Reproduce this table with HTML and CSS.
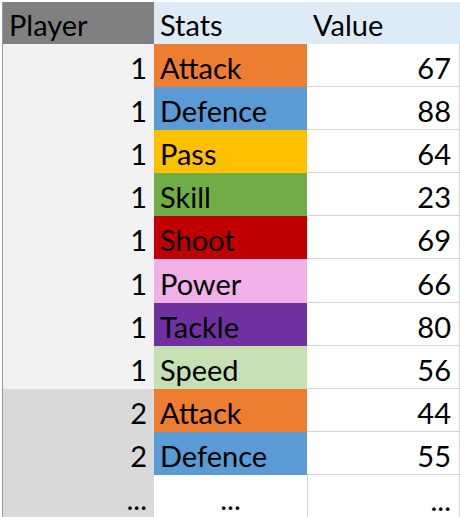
FILE: index.html
```html
<!DOCTYPE html>
<html>
<head>
<meta charset="utf-8">
<link rel="stylesheet" href="styles.css">
</head>
<body>
<div class="sheet">
  <div class="cell head head-player">Player</div>
  <div class="cell head head-blue">Stats</div>
  <div class="cell head head-blue">Value</div>

  <div class="cell num p1">1</div><div class="cell stat attack">Attack</div><div class="cell num val">67</div>
  <div class="cell num p1">1</div><div class="cell stat defence">Defence</div><div class="cell num val">88</div>
  <div class="cell num p1">1</div><div class="cell stat pass">Pass</div><div class="cell num val">64</div>
  <div class="cell num p1">1</div><div class="cell stat skill">Skill</div><div class="cell num val">23</div>
  <div class="cell num p1">1</div><div class="cell stat shoot">Shoot</div><div class="cell num val">69</div>
  <div class="cell num p1">1</div><div class="cell stat power">Power</div><div class="cell num val">66</div>
  <div class="cell num p1">1</div><div class="cell stat tackle">Tackle</div><div class="cell num val">80</div>
  <div class="cell num p1">1</div><div class="cell stat speed">Speed</div><div class="cell num val">56</div>
  <div class="cell num p2">2</div><div class="cell stat attack">Attack</div><div class="cell num val">44</div>
  <div class="cell num p2">2</div><div class="cell stat defence">Defence</div><div class="cell num val">55</div>
  <div class="cell num p2">...</div><div class="cell stat center blank">...</div><div class="cell num val last">...</div>
</div>
</body>
</html>
```

FILE: styles.css
```css
html, body {
  margin: 0;
  padding: 0;
  background: #ffffff;
}

body {
  width: 460px;
  height: 517px;
  overflow: hidden;
  font-family: "Lato", "Liberation Sans", sans-serif;
  font-size: 29px;
  color: #000000;
}

.sheet {
  margin: 2px 0 0 2px;
  border-left: 1px solid #9a9a9a;
  display: grid;
  grid-template-columns: 151px 153px 153px;
  grid-template-rows: 42px;
  grid-auto-rows: 43.1px;
}

.cell {
  display: flex;
  align-items: flex-end;
  line-height: 1;
  padding: 0 6px 5px 6px;
  box-sizing: border-box;
  white-space: nowrap;
}

.num {
  justify-content: flex-end;
  padding-right: 7px;
}

.center {
  justify-content: center;
}

.head-player {
  background: #808080;
}

.head-blue {
  background: #ddebf7;
}

.p1 { background: #f2f2f2; }
.p2 { background: #d9d9d9; }

.val {
  background: #ffffff;
  border-bottom: 1px solid #d4d4d4;
  border-right: 1px solid #d4d4d4;
  padding-right: 8px;
  padding-bottom: 4px;
}

.val.last {
  border-bottom: none;
  box-shadow: inset 1px 0 #d4d4d4;
}

.attack { background: #ed7d31; }
.defence { background: #5b9bd5; }
.pass { background: #ffc000; }
.skill { background: #70ad47; }
.shoot { background: #c00000; }
.power { background: #f2b0e9; }
.tackle { background: #7030a0; }
.speed { background: #c6e0b4; }
.blank { background: #ffffff; }
```
